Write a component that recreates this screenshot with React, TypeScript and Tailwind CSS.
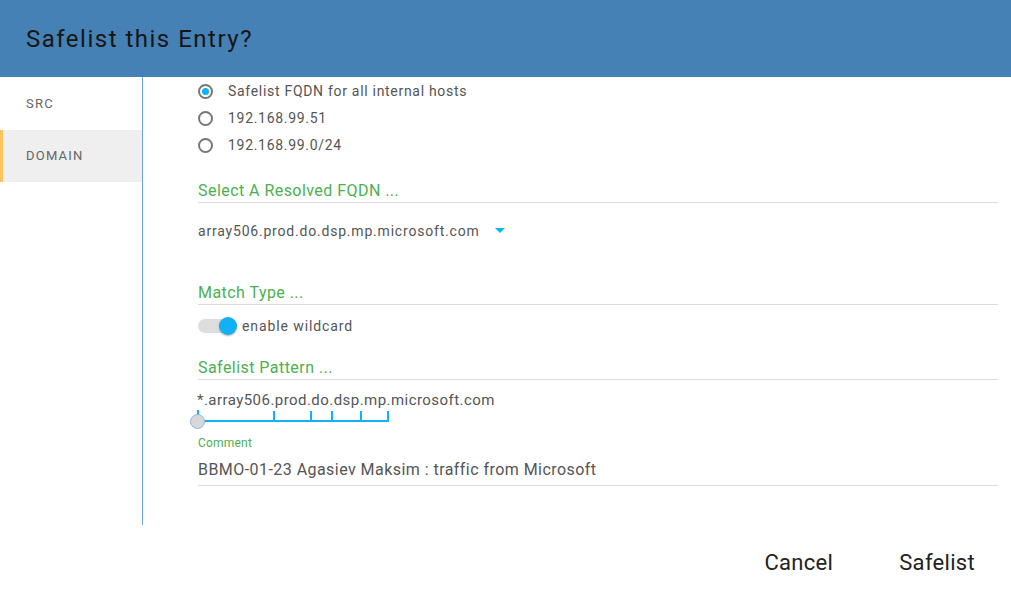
import React, { useState } from "react"

const font = { fontFamily: '"Roboto", "Liberation Sans", sans-serif' }

function Radio({ checked, label }: { checked: boolean; label: string }) {
    return (
        <div className="flex h-[27px] items-center">
            <span className="flex h-[15px] w-[15px] items-center justify-center rounded-full border-2 border-[#777]">
                {checked && <span className="h-[7px] w-[7px] rounded-full bg-[#12b0f5]" />}
            </span>
            <span className="ml-[15px] text-[14px] tracking-[0.7px] text-[#555]">{label}</span>
        </div>
    )
}

function SectionLabel({ children, className = "" }: { children: React.ReactNode; className?: string }) {
    return (
        <div className={`border-b border-[#dcdcdc] pb-[1px] text-[16px] leading-[20px] tracking-[0.45px] text-[#4cb04f] ${className}`}>
            {children}
        </div>
    )
}

export default function App() {
    const [tab, setTab] = useState("DOMAIN")
    const [wildcard, setWildcard] = useState(true)
    const ticks = [76, 113, 134, 163, 190]

    return (
        <div className="flex h-[593px] w-[1011px] flex-col bg-white" style={font}>
            <div className="flex h-[77px] items-center bg-[#4581b4] pl-[26px]">
                <h2 className="text-[24px] tracking-[1.5px] text-[#161616]">Safelist this Entry?</h2>
            </div>

            <div className="flex h-[448px]">
                <div className="w-[143px] shrink-0 border-r border-[#6ea3dc]">
                    {["SRC", "DOMAIN"].map((t) => (
                        <div
                            key={t}
                            onClick={() => setTab(t)}
                            className={`flex h-[52.5px] cursor-pointer items-center text-[13px] tracking-[1.2px] text-[#666] ${tab === t ? "border-l-[3px] border-[#fdc55b] bg-[#efefef] pl-[23px]" : "pl-[26px]"}`}
                        >
                            {t}
                        </div>
                    ))}
                </div>

                <div className="flex-1 pl-[55px] pr-[13px] pt-[1px]">
                    <Radio checked label="Safelist FQDN for all internal hosts" />
                    <Radio checked={false} label="192.168.99.51" />
                    <Radio checked={false} label="192.168.99.0/24" />

                    <SectionLabel className="mt-[22px]">Select A Resolved FQDN ...</SectionLabel>
                    <div className="mt-[18px] flex h-[20px] items-center text-[14px] tracking-[0.8px] text-[#555]">
                        array506.prod.do.dsp.mp.microsoft.com
                        <svg className="ml-[15px]" width="10" height="6" viewBox="0 0 10 6">
                            <path d="M0 0 L10 0 L5 5 Z" fill="#12b0f5" />
                        </svg>
                    </div>

                    <SectionLabel className="mt-[42px]">Match Type ...</SectionLabel>
                    <div className="mt-[11px] flex h-[20px] items-center">
                        <button onClick={() => setWildcard(!wildcard)} className="relative h-[14px] w-[36px] rounded-full bg-[#dedede]">
                            <span className={`absolute top-[-2px] h-[18px] w-[18px] rounded-full shadow-[0_1px_2px_rgba(0,0,0,0.3)] ${wildcard ? "left-[21px] bg-[#12b0f5]" : "left-[-1px] bg-[#fafafa]"}`} />
                        </button>
                        <span className="ml-[8px] text-[14px] tracking-[0.9px] text-[#555]">enable wildcard</span>
                    </div>

                    <SectionLabel className="mt-[22px]">Safelist Pattern ...</SectionLabel>
                    <div className="ml-[-1px] mt-[10px] h-[20px] text-[15px] leading-[20px] tracking-[0.45px] text-[#555]">
                        *.array506.prod.do.dsp.mp.microsoft.com
                    </div>
                    <div className="relative ml-[-1px] h-[20px] w-[200px]">
                        <div className="absolute left-0 top-[10px] h-[2px] w-[192px] bg-[#12b0f5]" />
                        <div className="absolute left-[0px] top-[0px] h-[6px] w-[2px] bg-[#12b0f5]" />
                        {ticks.map((x) => (
                            <div key={x} className="absolute top-[1px] h-[10px] w-[2px] bg-[#12b0f5]" style={{ left: x }} />
                        ))}
                        <div className="absolute left-[-7px] top-[4px] h-[15px] w-[15px] rounded-full border border-[#8ab8e6] bg-[#d8d8d8]" />
                    </div>

                    <div className="mt-[6px] text-[12px] leading-[14px] tracking-[0.2px] text-[#4cb04f]">Comment</div>
                    <div className="mt-[9px] border-b border-[#dcdcdc] pb-[4px] text-[16px] leading-[22px] tracking-[0.45px] text-[#555]">
                        BBMO-01-23 Agasiev Maksim : traffic from Microsoft
                    </div>
                </div>
            </div>

            <div className="flex flex-1 items-center justify-end gap-[66px] pr-[36px] pt-[6px]">
                <button className="text-[22px] tracking-[0.3px] text-[#222]">Cancel</button>
                <button className="text-[22px] tracking-[0.3px] text-[#222]">Safelist</button>
            </div>
        </div>
    )
}
